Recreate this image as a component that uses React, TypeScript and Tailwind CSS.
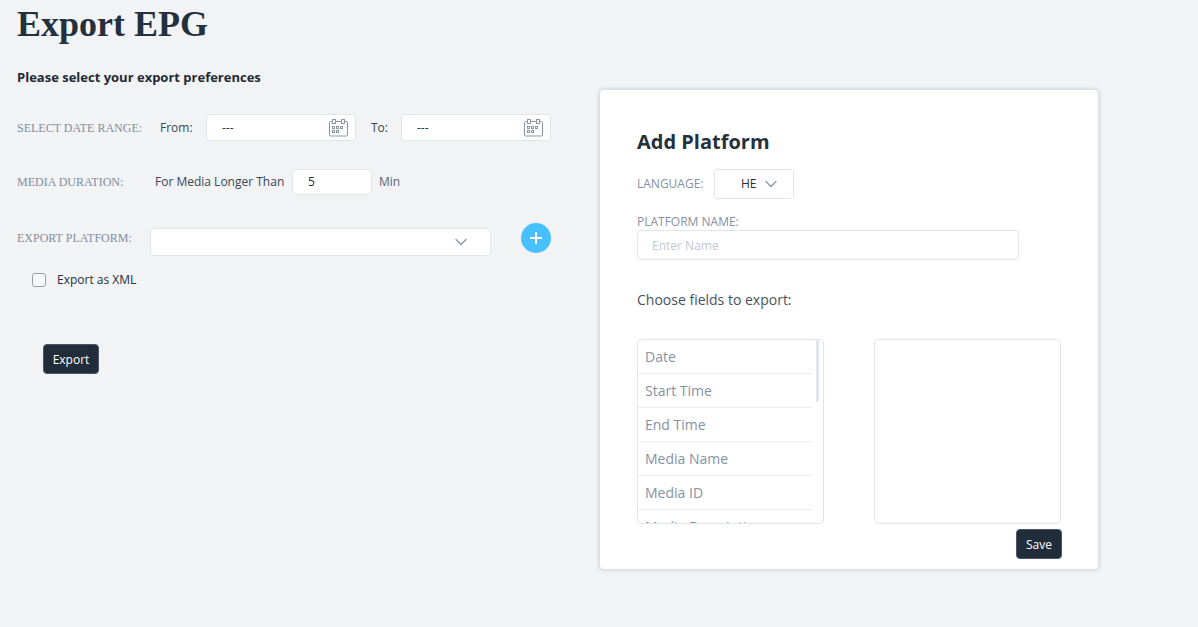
import { ChevronDown } from "lucide-react";

const sans = "font-['Open_Sans',sans-serif]";

const CalendarIcon = () => (
  <svg width="20" height="18" viewBox="0 0 20 18" fill="none" stroke="#8a98a8" strokeWidth="1">
    <path d="M3.500 2.500H1.500a1 1 0 0 0-1 1v12.500a1 1 0 0 0 1 1h16a1 1 0 0 0 1-1V3.500a1 1 0 0 0-1-1h-2" />
    <path d="M6.500 2.500h6" />
    <rect x="3.500" y="0.500" width="3" height="4" fill="#fff" />
    <rect x="12.500" y="0.500" width="3" height="4" fill="#fff" />
    <rect x="3.500" y="7.500" width="2" height="2" />
    <rect x="7.500" y="7.500" width="2" height="2" />
    <rect x="11.500" y="7.500" width="2" height="2" />
    <rect x="3.500" y="11.500" width="2" height="2" />
    <rect x="7.500" y="11.500" width="2" height="2" />
  </svg>
);

const DateBox = () => (
  <div className="w-[150px] h-[27px] flex items-center justify-between pl-[15px] pr-[6px] bg-white border border-[#e1e5ea] rounded-[4px]">
    <span className="text-xs text-[#2a3644]">---</span>
    <CalendarIcon />
  </div>
);

const Label = ({ text, w }: { text: string; w: string }) => (
  <span className={`${w} shrink-0 font-['Liberation_Serif',serif] text-xs text-[#838e9d]`}>{text}</span>
);

const fields = ["Date", "Start Time", "End Time", "Media Name", "Media ID", "Media Description"];

const App = () => {
  return (
    <div className={`${sans} flex h-[627px] w-full overflow-hidden bg-[#f1f3f5] text-[#25303d]`}>
      <div className="w-[600px] shrink-0 pl-[17px]">
        <h1 className="h-[50px] font-['Liberation_Serif',serif] text-[36px] font-bold leading-[48px] text-[#25303d]">
          Export EPG
        </h1>
        <p className="mt-[18px] text-[13px] font-bold leading-[18px] text-[#1f2935]">
          Please select your export preferences
        </p>

        <div className="mt-[28px] flex items-center">
          <Label text="SELECT DATE RANGE:" w="w-[143px]" />
          <span className="w-[46px] text-xs text-[#3a4654]">From:</span>
          <DateBox />
          <span className="w-[45px] pl-[15px] text-xs text-[#3a4654]">To:</span>
          <DateBox />
        </div>

        <div className="mt-[28px] flex items-center">
          <Label text="MEDIA DURATION:" w="w-[138px]" />
          <span className="w-[137px] whitespace-nowrap text-xs text-[#3a4654]">For Media Longer Than</span>
          <div className="w-[80px] h-[26px] flex items-center pl-[15px] bg-white border border-[#e1e5ea] rounded-[4px] text-xs text-[#25303d]">
            5
          </div>
          <span className="ml-[7px] text-xs text-[#5a6675]">Min</span>
        </div>

        <div className="mt-[28px] flex items-center h-[30px]">
          <Label text="EXPORT PLATFORM:" w="w-[133px]" />
          <div className="mt-[8px] w-[341px] h-[28px] flex items-center justify-end pr-[19px] bg-white border border-[#e1e5ea] rounded-[4px]">
            <ChevronDown size={20} strokeWidth={1.6} color="#8a98a8" />
          </div>
          <div className="ml-[30px] w-[30px] h-[30px] flex items-center justify-center rounded-full bg-[#46c0ff]">
            <svg width="14" height="14" viewBox="0 0 14 14" stroke="#fff" strokeWidth="2">
              <path d="M7 1v12M1 7h12" />
            </svg>
          </div>
        </div>

        <div className="mt-[18px] ml-[15px] flex items-center">
          <span className="w-[14px] h-[14px] rounded-[3px] border border-[#9a9fa6] bg-[#f7f8f9]" />
          <span className="ml-[11px] text-xs leading-[18px] text-[#25303d]">Export as XML</span>
        </div>

        <button className="mt-[55px] ml-[26px] block w-[56px] h-[30px] pt-[1px] rounded-[4px] border border-[#4a5766] bg-[#212d3a] text-xs text-white">
          Export
        </button>
      </div>

      <div className="mt-[90px] h-[479px] w-[498px] shrink-0 rounded-[4px] bg-white pl-[37px] shadow-[0_0_3px_2px_rgba(200,206,213,0.6)]">
        <h2 className="mt-[38px] text-xl font-bold leading-[28px] text-[#25303d]">Add Platform</h2>

        <div className="mt-[13px] flex items-center">
          <span className="w-[77px] text-xs text-[#8492a6]">LANGUAGE:</span>
          <div className="w-[80px] h-[30px] flex items-center pl-[26px] border border-[#e1e5ea] rounded-[4px] text-xs text-[#25303d]">
            <span>HE</span>
            <ChevronDown size={20} strokeWidth={1.6} color="#8a98a8" className="ml-[4px]" />
          </div>
        </div>

        <p className="mt-[15px] text-xs leading-[16px] text-[#8492a6]">PLATFORM NAME:</p>
        <div className="w-[382px] h-[30px] flex items-center pl-[14px] pt-[1px] border border-[#e1e5ea] rounded-[4px] text-xs text-[#c2c9d2]">
          Enter Name
        </div>

        <p className="mt-[30px] text-sm leading-[20px] text-[#46525f]">Choose fields to export:</p>

        <div className="mt-[29px] flex items-start">
          <div className="relative w-[187px] h-[185px] overflow-hidden border border-[#e1e5ea] rounded-[4px]">
            <div className="w-[174px]">
              {fields.map((f) => (
                <div key={f} className="h-[34px] pl-[7px] flex items-center border-b border-[#ebedf0] text-sm whitespace-nowrap text-[#8492a6]">
                  {f}
                </div>
              ))}
            </div>
            <div className="absolute right-[4px] top-0 w-[3px] h-[62px] rounded-sm bg-[#e1e5ea]" />
          </div>

          <div className="ml-[50px] flex flex-col items-end">
            <div className="w-[187px] h-[185px] border border-[#e1e5ea] rounded-[4px]" />
            <button className="mt-[5px] -mr-[1px] w-[46px] h-[30px] pt-[1px] rounded-[4px] border border-[#4a5766] bg-[#212d3a] text-xs text-white">
              Save
            </button>
          </div>
        </div>
      </div>
    </div>
  );
};

export default App;
